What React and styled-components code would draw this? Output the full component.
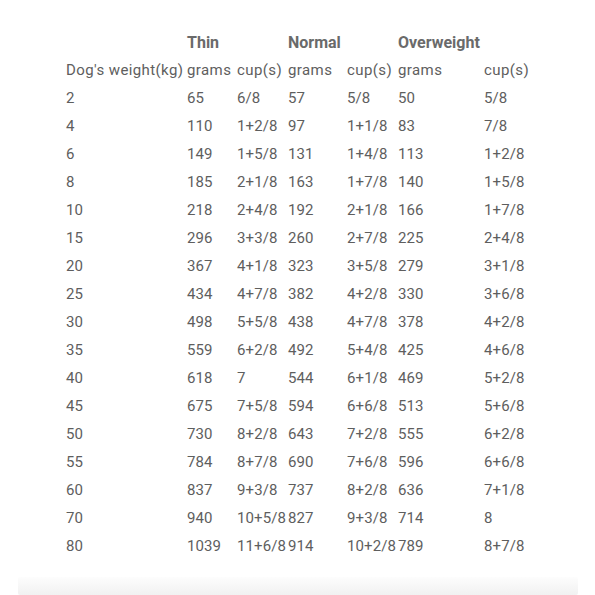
import React from 'react'
import styled, { createGlobalStyle } from 'styled-components'

const GlobalS = createGlobalStyle`
    body {
        margin: 0;
        background: #fff;
        font-family: Roboto, 'Liberation Sans', sans-serif;
    }
`

const rows = [
    ['2', '65', '6/8', '57', '5/8', '50', '5/8'],
    ['4', '110', '1+2/8', '97', '1+1/8', '83', '7/8'],
    ['6', '149', '1+5/8', '131', '1+4/8', '113', '1+2/8'],
    ['8', '185', '2+1/8', '163', '1+7/8', '140', '1+5/8'],
    ['10', '218', '2+4/8', '192', '2+1/8', '166', '1+7/8'],
    ['15', '296', '3+3/8', '260', '2+7/8', '225', '2+4/8'],
    ['20', '367', '4+1/8', '323', '3+5/8', '279', '3+1/8'],
    ['25', '434', '4+7/8', '382', '4+2/8', '330', '3+6/8'],
    ['30', '498', '5+5/8', '438', '4+7/8', '378', '4+2/8'],
    ['35', '559', '6+2/8', '492', '5+4/8', '425', '4+6/8'],
    ['40', '618', '7', '544', '6+1/8', '469', '5+2/8'],
    ['45', '675', '7+5/8', '594', '6+6/8', '513', '5+6/8'],
    ['50', '730', '8+2/8', '643', '7+2/8', '555', '6+2/8'],
    ['55', '784', '8+7/8', '690', '7+6/8', '596', '6+6/8'],
    ['60', '837', '9+3/8', '737', '8+2/8', '636', '7+1/8'],
    ['70', '940', '10+5/8', '827', '9+3/8', '714', '8'],
    ['80', '1039', '11+6/8', '914', '10+2/8', '789', '8+7/8'],
]

const widths = [121, 50, 51, 59, 51, 86, 80]

const App = () => (
    <PageS>
        <GlobalS />
        <TableS>
            <colgroup>
                {widths.map((w, i) => (
                    <col key={i} style={{ width: w }} />
                ))}
            </colgroup>
            <thead>
                <tr>
                    <HeadS />
                    <HeadS>Thin</HeadS>
                    <HeadS />
                    <HeadS>Normal</HeadS>
                    <HeadS />
                    <HeadS>Overweight</HeadS>
                    <HeadS />
                </tr>
            </thead>
            <tbody>
                <tr>
                    <CellS $wide>Dog's weight(kg)</CellS>
                    <CellS $wide>grams</CellS>
                    <CellS $wide>cup(s)</CellS>
                    <CellS $wide>grams</CellS>
                    <CellS $wide>cup(s)</CellS>
                    <CellS $wide>grams</CellS>
                    <CellS $wide>cup(s)</CellS>
                </tr>
                {rows.map((r) => (
                    <tr key={r[0]}>
                        {r.map((v, i) => (
                            <CellS key={i}>{v}</CellS>
                        ))}
                    </tr>
                ))}
            </tbody>
        </TableS>
        <NextCardS />
    </PageS>
)

export default App

const PageS = styled.div`
    width: 595px;
    height: 595px;
    overflow: hidden;
    padding-top: 28px;
    box-sizing: border-box;
    display: flex;
    flex-direction: column;
`
const TableS = styled.table`
    table-layout: fixed;
    border-collapse: collapse;
    margin-left: 66px;
    width: ${widths.reduce((a, b) => a + b, 0)}px;
`
const HeadS = styled.th`
    padding: 0;
    height: 28px;
    text-align: left;
    font-size: 16px;
    font-weight: 700;
    color: #6a6a6a;
    white-space: nowrap;
`
const CellS = styled.td`
    padding: 0;
    height: 28px;
    font-size: 15px;
    color: #5e5e5e;
    white-space: nowrap;
    letter-spacing: ${(p) => (p.$wide ? '0.4px' : '0.1px')};
`
const NextCardS = styled.div`
    margin: 17px 17px 0 18px;
    height: 40px;
    background: linear-gradient(#fdfdfd, #f1f1f1);
    border-radius: 2px;
`
